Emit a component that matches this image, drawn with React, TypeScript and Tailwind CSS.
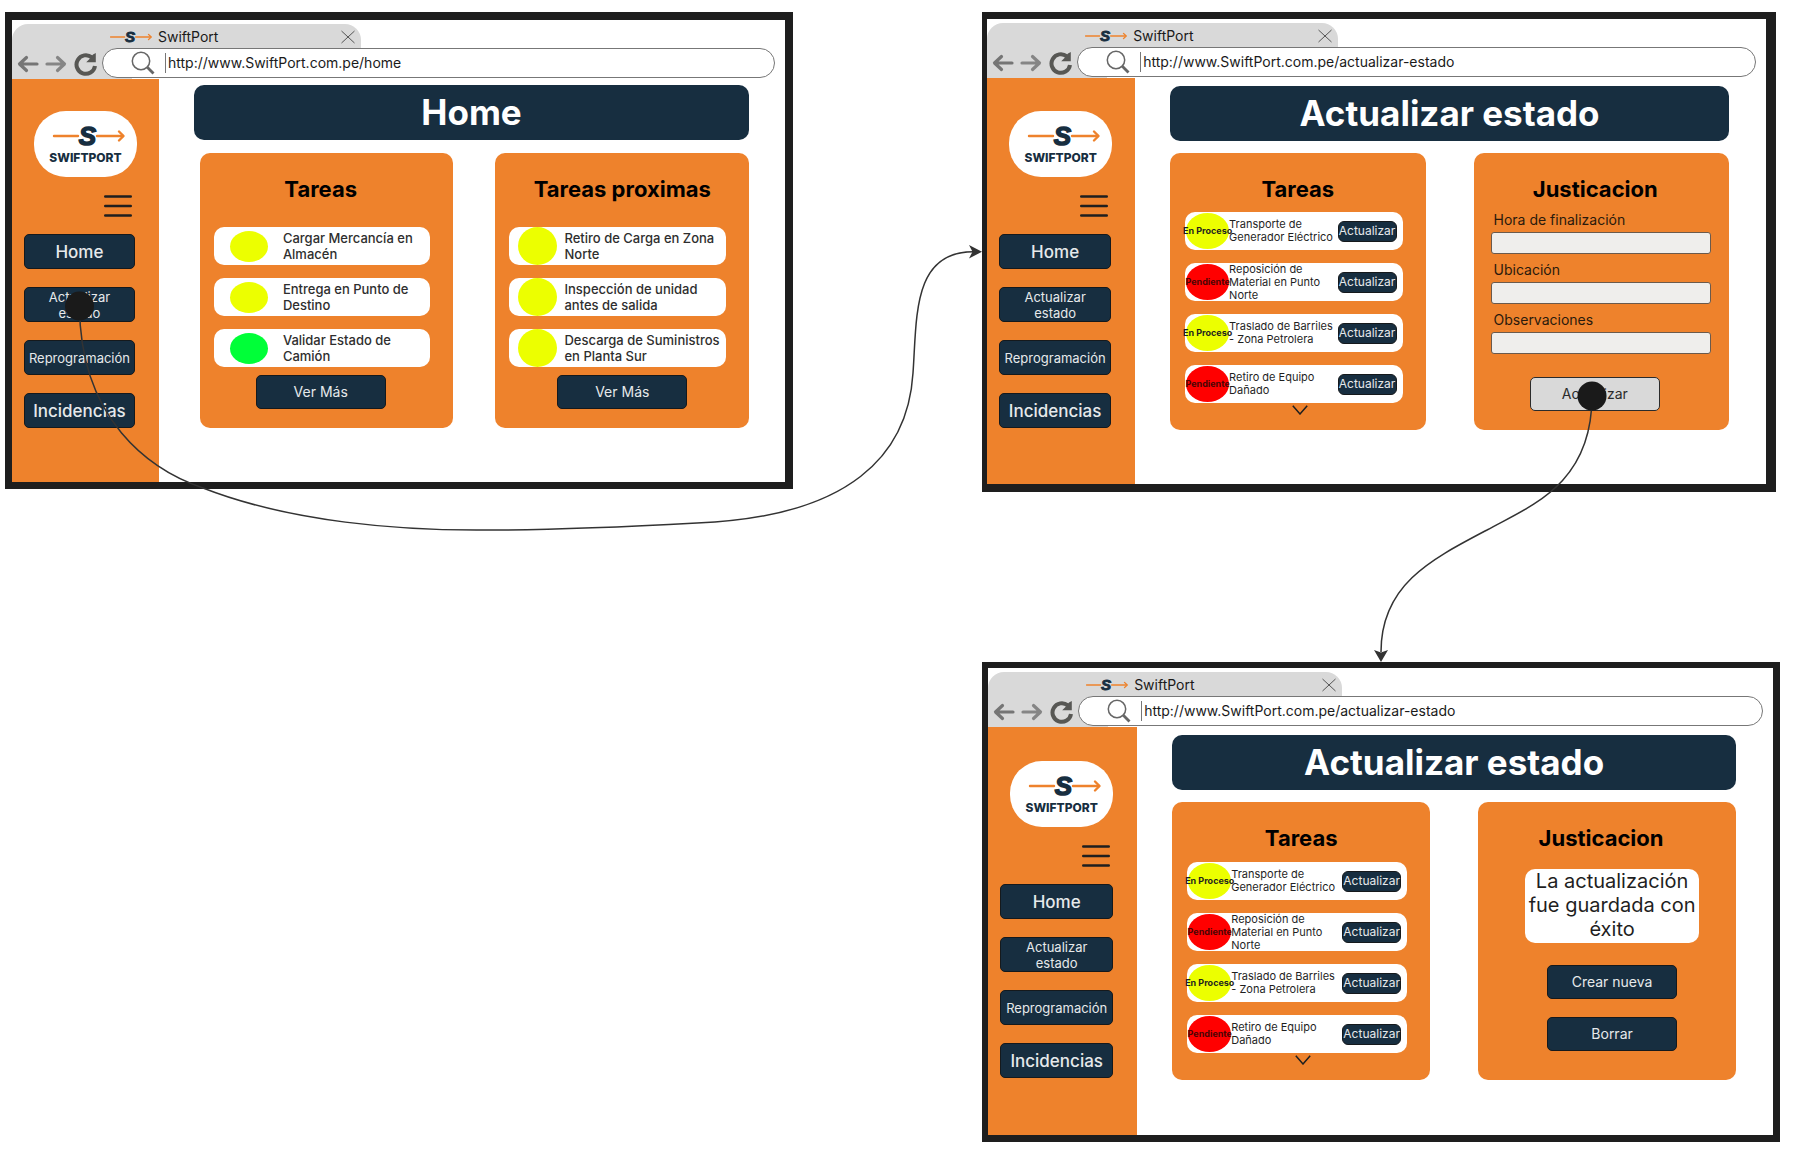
import type { ReactNode } from "react";

type Status = "yellow" | "green";

function SwiftMark({ className }: { className: string }) {
  return (
    <svg viewBox="0 0 72 24" className={"shrink-0 overflow-visible " + className} fill="none" aria-hidden="true">
      <path d="M1 12H25M44 12H70" stroke="#ee822c" strokeWidth="2.4" strokeLinecap="round" />
      <path d="M66 7.5L70.5 12L66 16.5" stroke="#ee822c" strokeWidth="2.4" strokeLinecap="round" strokeLinejoin="round" />
      <text
        x="34.5"
        y="21.300"
        textAnchor="middle"
        fontFamily="Liberation Sans, sans-serif"
        fontWeight="700"
        fontStyle="italic"
        fontSize="26"
        fill="#172e40"
        stroke="#172e40"
        strokeWidth="1.5"
      >
        S
      </text>
    </svg>
  );
}

function ArrowIcon({ flip, color }: { flip?: boolean; color: string }) {
  return (
    <svg viewBox="0 0 22 18" className="h-[18px] w-[22px]" fill="none" stroke={color} strokeWidth="3.2" strokeLinecap="round" strokeLinejoin="round" aria-hidden="true">
      {flip ? <path d="M2 9H19M12.5 2.5L19.5 9L12.5 15.5" /> : <path d="M20 9H3M9.500 2.500L2.500 9L9.500 15.500" />}
    </svg>
  );
}

function ReloadIcon() {
  return (
    <svg viewBox="0 0 24 24" className="h-6 w-6" fill="none" aria-hidden="true">
      <path d="M17.800 5.400A9.300 9.300 0 1 0 21 14" stroke="#575754" strokeWidth="4" />
      <path d="M21.800 1V10.200H12.200L16 6.500L19 2.500Z" fill="#575754" />
    </svg>
  );
}

function SearchIcon() {
  return (
    <svg viewBox="0 0 24 24" className="h-6 w-6 shrink-0" fill="none" stroke="#666" aria-hidden="true">
      <circle cx="10" cy="10" r="8.700" strokeWidth="1.500" />
      <path d="M16.300 16.300L22.500 22.500" strokeWidth="2.800" />
    </svg>
  );
}

function BrowserHeader({ url }: { url: string }) {
  return (
    <header className="pt-1">
      <div className="flex h-6 w-[45.1%] items-center rounded-t-[16px] bg-[#d9d9d9] pt-[2px] pr-[6px] pl-[98px]">
        <SwiftMark className="h-[14px] w-[42px]" />
        <span className="ml-[6px] text-[14px] leading-5 text-[#1a1a1a]">SwiftPort</span>
        <button type="button" aria-label="Cerrar pestaña" className="ml-auto">
          <svg viewBox="0 0 14 14" className="h-[14px] w-[14px]" fill="none" stroke="#555" strokeWidth="1" aria-hidden="true">
            <path d="M0.500 1L13.500 13M13.500 1L0.500 13" />
          </svg>
        </button>
      </div>
      <div className="flex h-[31px] items-start bg-[linear-gradient(to_right,#d9d9d9_120px,#ffffff_120px)] pr-[10px] pl-[5px]">
        <div className="flex h-[31px] w-[85px] shrink-0 items-center">
          <button type="button" aria-label="Atrás">
            <ArrowIcon color="#757575" />
          </button>
          <button type="button" aria-label="Adelante" className="ml-[6px]">
            <ArrowIcon flip color="#858585" />
          </button>
          <button type="button" aria-label="Recargar" className="ml-[7px]">
            <ReloadIcon />
          </button>
        </div>
        <div className="flex h-[30px] flex-1 items-center rounded-full border border-[#777] bg-white pl-[28px]">
          <SearchIcon />
          <div className="ml-[10px] h-[20px] border-l border-[#777]" />
          <input
            type="text"
            aria-label="Dirección"
            defaultValue={url}
            className="ml-[2px] h-[20px] flex-1 bg-transparent text-[14px] leading-5 text-[#1a1a1a] outline-none"
          />
        </div>
      </div>
    </header>
  );
}

function NavButton({ children, large }: { children: ReactNode; large?: boolean }) {
  return (
    <button
      type="button"
      className={
        "flex h-[35px] w-full items-center justify-center rounded-[5px] border border-[#15191c] bg-[#172e40] text-center text-[#e6e9eb] " +
        (large ? "text-[17px] leading-5 font-medium" : "text-[13px] leading-4")
      }
    >
      {children}
    </button>
  );
}

function Sidebar({ spacing, gap }: { spacing: string; gap: string }) {
  return (
    <aside className={"w-[19%] shrink-0 bg-[#ee822c] pr-[24px] pl-[12px] " + spacing}>
      <div className="ml-[10px] flex h-[66px] w-[103px] flex-col items-center rounded-[32px] bg-white pt-[13px]">
        <SwiftMark className="ml-[6px] h-[24px] w-[72px]" />
        <span className="mt-[2px] text-[12px] leading-4 font-extrabold text-[#172e40]">SWIFTPORT</span>
      </div>
      <button type="button" aria-label="Menú" className="mt-[17px] mr-[3px] ml-auto block">
        <svg viewBox="0 0 28 24" className="h-6 w-7" stroke="#1f1f1f" strokeWidth="2.400" strokeLinecap="round" aria-hidden="true">
          <path d="M1.200 2.500H26.800M1.200 12H26.800M1.200 21.500H26.800" />
        </svg>
      </button>
      <nav className={"mt-4 flex flex-col " + gap}>
        <NavButton large>Home</NavButton>
        <NavButton>
          Actualizar
          <br />
          estado
        </NavButton>
        <NavButton>Reprogramación</NavButton>
        <NavButton large>Incidencias</NavButton>
      </nav>
    </aside>
  );
}

type FrameProps = {
  url: string;
  title: string;
  border: string;
  side: string;
  gap: string;
  spacing: string;
  cards: string;
  children: ReactNode;
};

function BrowserFrame({ url, title, border, side, gap, spacing, cards, children }: FrameProps) {
  return (
    <section className={"flex flex-col border-[#1e1e1e] bg-white " + border}>
      <BrowserHeader url={url} />
      <div className="flex flex-1">
        <Sidebar spacing={side} gap={gap} />
        <main className={"flex-1 pl-[35px] " + spacing}>
          <h1 className="rounded-[10px] bg-[#172e40] text-center text-[35px] leading-[55px] font-bold text-white">{title}</h1>
          <div className={"grid grid-cols-2 " + cards}>{children}</div>
        </main>
      </div>
    </section>
  );
}

function Card({ title, titleClass = "", height, children }: { title: string; titleClass?: string; height: string; children: ReactNode }) {
  return (
    <article className={"rounded-[10px] bg-[#ee822c] pt-[22px] " + height}>
      <h2 className={"text-center text-[22px] leading-7 font-bold text-black " + titleClass}>{title}</h2>
      {children}
    </article>
  );
}

function ActionButton({ children, light }: { children: ReactNode; light?: boolean }) {
  return (
    <button
      type="button"
      className={
        "block h-[34px] w-[130px] rounded-[5px] border text-[14px] leading-4 " +
        (light ? "border-[#2b2b2b] bg-[#d9d9d9] text-[#2b2b2b]" : "border-[#15191c] bg-[#172e40] text-[#e6e9eb]")
      }
    >
      {children}
    </button>
  );
}

function HomeTasks({ tasks, wide }: { tasks: [string, Status][]; wide?: boolean }) {
  return (
    <ul className="mt-[24px] mr-[23px] ml-[14px] flex flex-col gap-[13px]">
      {tasks.map(([name, status]) => (
        <li key={name} className={"flex h-[38px] items-center rounded-[10px] bg-white " + (wide ? "pl-[9px]" : "pl-[16px]")}>
          <span
            className={
              "shrink-0 rounded-[50%] " +
              (wide ? "h-[38px] w-[39px] " : "h-[31px] w-[38px] ") +
              (status === "green" ? "bg-[#00ff38]" : "bg-[#ecff00]")
            }
          />
          <span className={"flex-1 text-[13px] leading-4 font-medium text-[#2e2e2e] " + (wide ? "ml-[7px]" : "ml-[15px] pr-2")}>{name}</span>
        </li>
      ))}
    </ul>
  );
}

const updateTasks: [string, boolean][] = [
  ["Transporte de Generador Eléctrico", false],
  ["Reposición de Material en Punto Norte", true],
  ["Traslado de Barriles - Zona Petrolera", false],
  ["Retiro de Equipo Dañado", true],
];

function UpdateTasks({ spacing }: { spacing: string }) {
  return (
    <>
      <ul className={"mr-[23px] ml-[15px] flex flex-col gap-[13px] " + spacing}>
        {updateTasks.map(([name, pending]) => (
          <li key={name} className="flex h-[38px] items-center rounded-[10px] bg-white pr-[6px] pl-[1px]">
            <span
              className={
                "flex h-[36px] w-[43px] shrink-0 items-center justify-center rounded-[50%] text-[9px] leading-3 font-bold whitespace-nowrap " +
                (pending ? "bg-[#ff0000] text-[#4a0505]" : "bg-[#ecff00] text-[#1f1f1f]")
              }
            >
              {pending ? "Pendiente" : "En Proceso"}
            </span>
            <span className="flex-1 text-[11px] leading-[13px] text-[#1f1f1f]">{name}</span>
            <button
              type="button"
              className="flex h-[21px] w-[59px] shrink-0 items-center justify-center rounded-[6px] border border-[#15191c] bg-[#172e40] text-[12px] leading-4 text-[#e6e9eb]"
            >
              Actualizar
            </button>
          </li>
        ))}
      </ul>
      <div className="mt-[2px] flex justify-center pl-1">
        <button type="button" aria-label="Mostrar más tareas">
          <svg viewBox="0 0 16 10" className="h-[10px] w-4" fill="none" stroke="#1f1f1f" strokeWidth="1.500" aria-hidden="true">
            <path d="M0.800 0.800L8 9L15.200 0.800" />
          </svg>
        </button>
      </div>
    </>
  );
}

function Field({ id, label }: { id: string; label: string }) {
  return (
    <div className="flex flex-col gap-1">
      <label htmlFor={id} className="pl-[3px] text-[14px] leading-4 text-[#2a1a0c]">
        {label}
      </label>
      <input id={id} type="text" className="h-[22px] w-full rounded-[3px] border border-[#6b5a4c] bg-[#efeeec] px-1 text-[13px]" />
    </div>
  );
}

function Connectors() {
  return (
    <svg className="pointer-events-none absolute top-0 left-0 h-[1149px] w-[1793px]" viewBox="0 0 1793 1149" fill="none" aria-hidden="true">
      <g stroke="#333333" strokeWidth="1.500">
        <path d="M79.500 306C80 420 150 470 203 488C290 522 400 531 490 530C560 530 660 525 697 523C850 517 908 455 913 373C917 318 912 251 974 251.700" />
        <path d="M1592 396C1592 485 1530 506 1487 530C1430 560 1381 585 1381 652" />
      </g>
      <path d="M982 251.700L969 245L972.500 251.700L969 258.500Z" fill="#333333" />
      <path d="M1381 662L1374 650L1381 652.500L1388 650Z" fill="#333333" />
      <circle cx="79.500" cy="306" r="14.500" fill="#1a1a1a" />
      <circle cx="1592" cy="396" r="14.500" fill="#1a1a1a" />
    </svg>
  );
}

export default function App() {
  return (
    <div className="relative min-h-screen bg-white pt-[12px] pr-[13px] pl-[5px] font-['Inter',sans-serif]">
      <div className="flex items-start justify-between">
        <div className="w-[44.4%]">
          <BrowserFrame
            url="http://www.SwiftPort.com.pe/home"
            title="Home"
            border="border-t-[8px] border-r-[8px] border-b-[7px] border-l-[7px]"
            side="pt-[32px]"
            gap="gap-[18px]"
            spacing="pt-[6px] pr-[36px] pb-[54px]"
            cards="mt-[13px] gap-[42px] pl-[6px]"
          >
            <Card title="Tareas" titleClass="pr-3" height="min-h-[275px]">
              <HomeTasks
                tasks={[
                  ["Cargar Mercancía en Almacén", "yellow"],
                  ["Entrega en Punto de Destino", "yellow"],
                  ["Validar Estado de Camión", "green"],
                ]}
              />
              <div className="mt-[8px] flex justify-center pr-3">
                <ActionButton>Ver Más</ActionButton>
              </div>
            </Card>
            <Card title="Tareas proximas" height="min-h-[275px]">
              <HomeTasks
                wide
                tasks={[
                  ["Retiro de Carga en Zona Norte", "yellow"],
                  ["Inspección de unidad antes de salida", "yellow"],
                  ["Descarga de Suministros en Planta Sur", "yellow"],
                ]}
              />
              <div className="mt-[8px] flex justify-center">
                <ActionButton>Ver Más</ActionButton>
              </div>
            </Card>
          </BrowserFrame>
        </div>

        <div className="flex w-[44.95%] flex-col">
          <div className="pr-[4px]">
            <BrowserFrame
              url="http://www.SwiftPort.com.pe/actualizar-estado"
              title="Actualizar estado"
              border="border-t-[7px] border-r-[10px] border-b-[8px] border-l-[5px]"
              side="pt-[33px]"
              gap="gap-[18px]"
              spacing="pt-[8px] pr-[37px] pb-[54px]"
              cards="mt-[12px] gap-[48px]"
            >
              <Card title="Tareas" height="min-h-[277px]">
                <UpdateTasks spacing="mt-[9px]" />
              </Card>
              <Card title="Justicacion" titleClass="pr-3" height="min-h-[277px]">
                <form className="mt-[9px] mr-[18px] ml-[17px]" onSubmit={(e) => e.preventDefault()}>
                  <div className="flex flex-col gap-[8px]">
                    <Field id="hora" label="Hora de finalización" />
                    <Field id="ubicacion" label="Ubicación" />
                    <Field id="observaciones" label="Observaciones" />
                  </div>
                  <div className="mt-[23px] flex justify-center pr-3">
                    <ActionButton light>Actualizar</ActionButton>
                  </div>
                </form>
              </Card>
            </BrowserFrame>
          </div>

          <div className="mt-[170px]">
            <BrowserFrame
              url="http://www.SwiftPort.com.pe/actualizar-estado"
              title="Actualizar estado"
              border="border-t-[6px] border-r-[7px] border-b-[7px] border-l-[6px]"
              side="pt-[34px]"
              gap="gap-[18px]"
              spacing="pt-[8px] pr-[37px] pb-[55px]"
              cards="mt-[12px] gap-[48px]"
            >
              <Card title="Tareas" height="min-h-[278px]">
                <UpdateTasks spacing="mt-[10px]" />
              </Card>
              <Card title="Justicacion" titleClass="pr-3" height="min-h-[278px]">
                <div className="mt-[17px] flex flex-col items-center pl-[10px]">
                  <p className="w-[174px] rounded-[10px] bg-white pb-[2px] text-center text-[20px] leading-6 text-[#1f1f1f]">
                    La actualización fue guardada con éxito
                  </p>
                  <div className="mt-[22px] flex flex-col gap-[18px]">
                    <ActionButton>Crear nueva</ActionButton>
                    <ActionButton>Borrar</ActionButton>
                  </div>
                </div>
              </Card>
            </BrowserFrame>
          </div>
        </div>
      </div>
      <Connectors />
    </div>
  );
}
